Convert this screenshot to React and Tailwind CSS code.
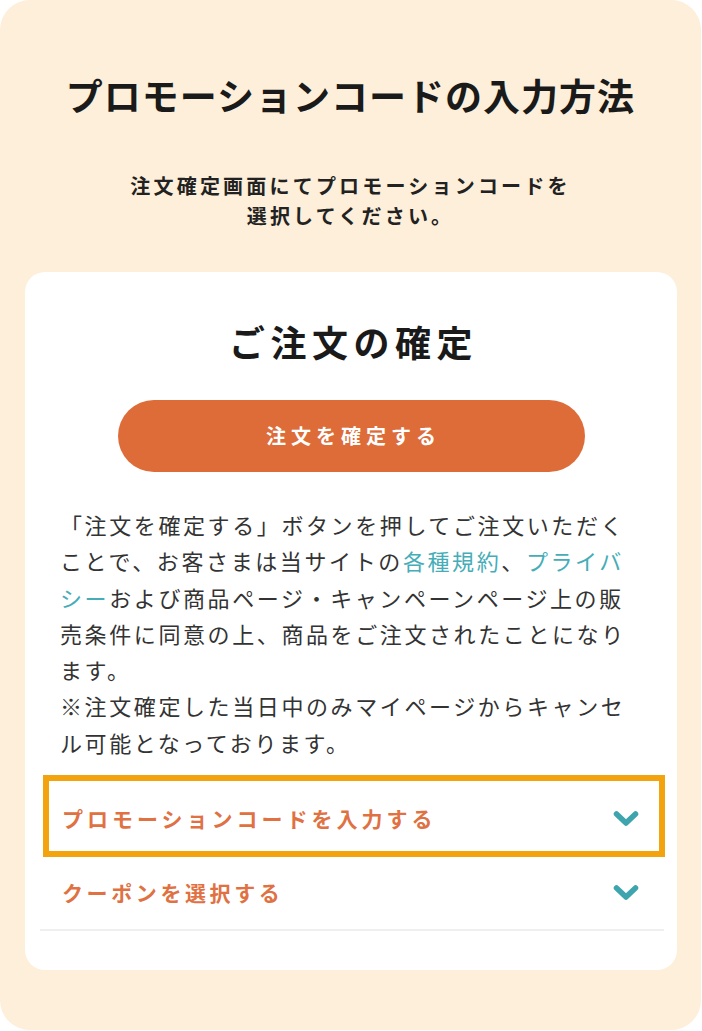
import React from "react";

const font = { fontFamily: '"Noto Sans CJK JP", "Noto Sans", sans-serif' };

function Chevron() {
  return (
    <svg width="26" height="18" viewBox="0 0 26 18" className="shrink-0">
      <polyline
        points="3.5,4 13,13 22.5,4"
        fill="none"
        stroke="#3ea5ae"
        strokeWidth="5.5"
        strokeLinecap="round"
        strokeLinejoin="round"
      />
    </svg>
  );
}

export default function App() {
  return (
    <div className="w-[702px] h-[1031px] bg-white" style={font}>
      <div className="w-[701px] h-[1030px] bg-[#fdefd9] rounded-[30px] flex flex-col items-center pt-[69px]">
        <h1 className="text-[37px] leading-[52px] font-bold text-[#1a1a1a] tracking-[1px]">
          プロモーションコードの入力方法
        </h1>
        <p className="mt-[50px] text-[20px] leading-[30px] font-bold text-[#222] tracking-[3.2px] text-center">
          注文確定画面にてプロモーションコードを
          <br />
          選択してください。
        </p>
        <div className="mt-[41px] w-[652px] ml-[1px] bg-white rounded-[20px] flex flex-col items-center pt-[44px] pb-[39px]">
          <h2 className="text-[36px] leading-[50px] font-bold text-[#1a1a1a] tracking-[5.5px] pl-[5px]">
            ご注文の確定
          </h2>
          <div className="mt-[34px] w-[467px] h-[72px] rounded-full bg-[#dd6c38] flex items-center justify-center">
            <span className="text-[20px] font-bold text-white tracking-[5px] pl-[5px]">注文を確定する</span>
          </div>
          <p className="mt-[34px] self-start ml-[35px] text-[22px] leading-[36.3px] text-[#333] tracking-[2.6px] whitespace-nowrap">
            「注文を確定する」ボタンを押してご注文いただく
            <br />
            ことで、お客さまは当サイトの<span className="text-[#45adb7]">各種規約</span>、<span className="text-[#45adb7]">プライバ</span>
            <br />
            <span className="text-[#45adb7]">シー</span>および商品ページ・キャンペーンページ上の販
            <br />
            売条件に同意の上、商品をご注文されたことになり
            <br />
            ます。
            <br />
            ※注文確定した当日中のみマイページからキャンセ
            <br />
            ル可能となっております。
          </p>
          <div className="mt-[15px] self-start ml-[15px] w-[624px] flex flex-col">
            <div className="ml-[3px] w-[622px] h-[82px] border-[6px] border-[#f2a30e] flex items-center justify-between pl-[13px] pr-[20px] pt-[6px]">
              <span className="text-[21px] font-bold text-[#e07142] tracking-[4px]">
                プロモーションコードを入力する
              </span>
              <Chevron />
            </div>
            <div className="h-[72px] flex items-center justify-between pl-[22px] pr-[25px]">
              <span className="text-[21px] font-bold text-[#e07142] tracking-[3.6px]">
                クーポンを選択する
              </span>
              <Chevron />
            </div>
            <div className="h-[2px] bg-[#efefef]" />
          </div>
        </div>
      </div>
    </div>
  );
}
